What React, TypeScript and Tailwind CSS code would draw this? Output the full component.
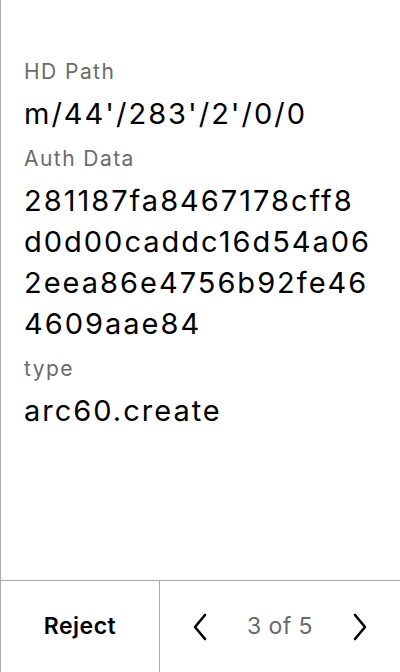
import React from "react";

const fields: { label: string; lines: string[] }[] = [
  { label: "HD Path", lines: ["m/44'/283'/2'/0/0"] },
  {
    label: "Auth Data",
    lines: ["281187fa8467178cff8", "d0d00caddc16d54a06", "2eea86e4756b92fe46", "4609aae84"],
  },
  { label: "type", lines: ["arc60.create"] },
];

export default function App() {
  return (
    <div
      className="w-[400px] h-[672px] bg-white flex flex-col border-l border-[#a9a9a9] text-black"
      style={{ fontFamily: "Inter, 'Noto Sans', sans-serif" }}
    >
      <div className="flex-1 pt-[58px] px-[23px] flex flex-col gap-[11px]">
        {fields.map((f) => (
          <div key={f.label} className="flex flex-col gap-[7px]">
            <div className="text-[21px] leading-[28px] tracking-[1.45px] text-[#6b6b6b]">{f.label}</div>
            <div className="text-[29px] leading-[41px] tracking-[2px] whitespace-nowrap">
              {f.lines.map((l) => (
                <div key={l}>{l}</div>
              ))}
            </div>
          </div>
        ))}
      </div>
      <div className="h-[92px] border-t border-[#a9a9a9] flex">
        <div className="w-[159px] border-r border-[#a9a9a9] flex items-center justify-center text-[23px] tracking-[0.5px] font-semibold">
          Reject
        </div>
        <div className="flex-1 flex items-center justify-between px-[32px]">
          <svg width="16" height="28" viewBox="0 0 16 28" fill="none">
            <path d="M13 2 L3 14 L13 26" stroke="black" strokeWidth="2.6" strokeLinecap="round" strokeLinejoin="round" />
          </svg>
          <span className="text-[23px] tracking-[0.4px] text-[#6b6b6b]">3 of 5</span>
          <svg width="16" height="28" viewBox="0 0 16 28" fill="none">
            <path d="M3 2 L13 14 L3 26" stroke="black" strokeWidth="2.6" strokeLinecap="round" strokeLinejoin="round" />
          </svg>
        </div>
      </div>
    </div>
  );
}
